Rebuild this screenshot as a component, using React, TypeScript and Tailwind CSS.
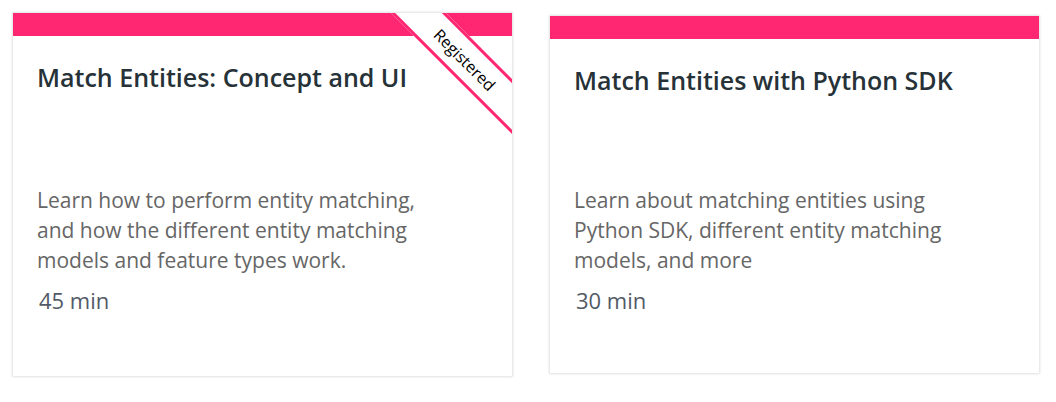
const FONT = "font-['Open_Sans',sans-serif]";

type CardProps = {
  title: string;
  description: string;
  duration: string;
  registered?: boolean;
  className?: string;
  titleGap: string;
};

function Ribbon() {
  return (
    <div className="absolute right-[-63px] top-[27px] flex h-[39px] w-[220px] rotate-45 items-center justify-center border-y-[3px] border-[#ff2672] bg-white">
      <span className="text-[16px] font-medium text-black">Registered</span>
    </div>
  );
}

function Card({ title, description, duration, registered, className, titleGap }: CardProps) {
  return (
    <div
      className={`relative flex flex-col overflow-hidden bg-white shadow-[0_0_2px_1px_rgba(0,0,0,0.12)] ${className}`}
    >
      <div className="h-[23px] shrink-0 bg-[#ff2672]" />
      {registered && <Ribbon />}
      <div className="flex flex-col px-6 pt-[26px]">
        <h2 className={`text-[25px] font-semibold leading-[30px] text-[#263238] ${titleGap}`}>{title}</h2>
        <p className="max-w-[398px] text-[21px] leading-[30px] text-[#666666]">{description}</p>
        <div className="mt-[10px] pl-[2px] text-[22px] leading-[30px] text-[#525a66]">{duration}</div>
      </div>
    </div>
  );
}

export default function App() {
  return (
    <div className={`flex h-[402px] w-[1056px] items-start bg-white pl-[13px] pt-[13px] ${FONT}`}>
      <Card
        className="h-[363px] w-[499px]"
        titleGap="mb-[93px]"
        registered
        title="Match Entities: Concept and UI"
        description="Learn how to perform entity matching, and how the different entity matching models and feature types work."
        duration="45 min"
      />
      <Card
        className="ml-[38px] mt-[3px] h-[357px] w-[489px]"
        titleGap="mb-[90px]"
        title="Match Entities with Python SDK"
        description="Learn about matching entities using Python SDK, different entity matching models, and more"
        duration="30 min"
      />
    </div>
  );
}
